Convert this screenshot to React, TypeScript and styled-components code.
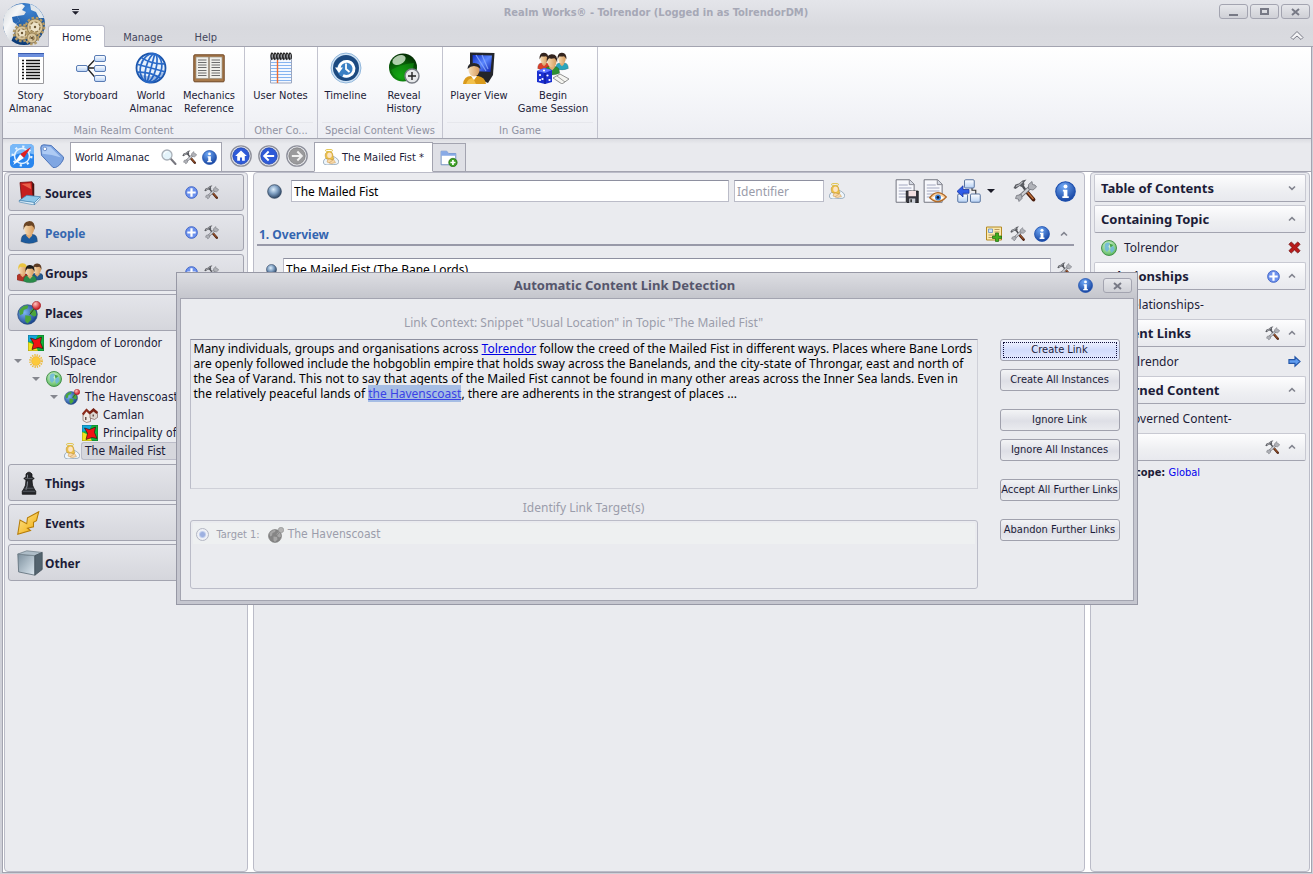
import React from "react";
import styled, { createGlobalStyle, css } from "styled-components";

const ink = "#1c1c38";
const line = "#a3a4b0";
const soft = "#bbbcc8";
const panel = "#eaebef";
const compact = `"DejaVu Sans Condensed", "DejaVu Sans", sans-serif`;

const GlobalStyle = createGlobalStyle`
  * { box-sizing: border-box; }
  body {
    margin: 0;
    font: 12px/15px "Noto Sans", sans-serif;
    color: ${ink};
    background: #d9dae0;
  }
  button, input { font: inherit; color: inherit; margin: 0; }
  ul { list-style: none; margin: 0; padding: 0; }
  h1, h2, h3, p { margin: 0; font-size: 12px; }
  svg { display: block; flex: none; }
`;

const smallText = css`
  font-family: ${compact};
  font-size: 11px;
`;

/* ---------- shared drawings ---------- */

const Hidden = styled.svg`
  width: 0;
  height: 0;
`;

const Paints = () => (
  <Hidden aria-hidden="true">
    <defs>
      <radialGradient id="blue" cx="40%" cy="25%" r="80%"><stop offset="0" stopColor="#6fa8f5" /><stop offset="1" stopColor="#123f9c" /></radialGradient>
      <radialGradient id="steel" cx="42%" cy="35%" r="65%"><stop offset="0" stopColor="#dceefc" /><stop offset=".5" stopColor="#7d9dc0" /><stop offset="1" stopColor="#2c4463" /></radialGradient>
      <radialGradient id="green" cx="40%" cy="80%" r="90%"><stop offset="0" stopColor="#12a012" /><stop offset=".6" stopColor="#075407" /><stop offset="1" stopColor="#021f02" /></radialGradient>
      <radialGradient id="earth" cx="35%" cy="40%" r="70%"><stop offset="0" stopColor="#7cb4f2" /><stop offset="1" stopColor="#123c86" /></radialGradient>
      <radialGradient id="aqua" cx="45%" cy="35%" r="65%"><stop offset="0" stopColor="#e4fbdf" /><stop offset="1" stopColor="#58b85c" /></radialGradient>
      <radialGradient id="red" cx="35%" cy="30%" r="70%"><stop offset="0" stopColor="#ffc4c0" /><stop offset="1" stopColor="#c8141c" /></radialGradient>
      <radialGradient id="logo" cx="60%" cy="15%" r="85%"><stop offset="0" stopColor="#3f86d6" /><stop offset="1" stopColor="#0c3b77" /></radialGradient>
      <linearGradient id="land" x1="0" y1="0" x2="1" y2="1"><stop offset="0" stopColor="#d3d8dc" /><stop offset=".4" stopColor="#f6f7f8" /><stop offset="1" stopColor="#b4bbc2" /></linearGradient>
      <linearGradient id="node" x1="0" y1="0" x2="0" y2="1"><stop offset="0" stopColor="#fff" /><stop offset="1" stopColor="#b5d0f4" /></linearGradient>
      <linearGradient id="skin" x1="0" y1="0" x2="1" y2="0"><stop offset="0" stopColor="#f6dcb4" /><stop offset="1" stopColor="#d79b5c" /></linearGradient>
      <linearGradient id="gold" x1="0" y1="0" x2="1" y2="1"><stop offset="0" stopColor="#ffe99a" /><stop offset="1" stopColor="#f0a800" /></linearGradient>
      <linearGradient id="screen" x1="0" y1="0" x2="1" y2="1"><stop offset="0" stopColor="#1030c8" /><stop offset=".5" stopColor="#5a86ff" /><stop offset="1" stopColor="#0a1ea8" /></linearGradient>
      <linearGradient id="cube" x1="0" y1="0" x2="1" y2="1"><stop offset="0" stopColor="#7d909e" /><stop offset="1" stopColor="#dfeaf2" /></linearGradient>
    </defs>
  </Hidden>
);

type IconProps = { size?: number };

const Svg = ({ size = 16, box = 32, children }: { size?: number; box?: number; children: React.ReactNode }) => (
  <svg width={size} height={size} viewBox={`0 0 ${box} ${box}`} aria-hidden="true">{children}</svg>
);

const Tools = ({ size }: IconProps) => (
  <Svg size={size} box={24}>
    <path d="M13.500 12.500 L20.500 20.500" stroke="#4a1e0e" strokeWidth="3.800" strokeLinecap="round" />
    <path d="M13.500 12 L20 19.500" stroke="#c0703a" strokeWidth="1.500" strokeLinecap="round" />
    <path d="M9 6 L13.500 12.500" stroke="#4d4f55" strokeWidth="2.200" />
    <path d="M0.500 9 L2.500 5.500 L6 4.500 L9.500 1.500 L13.500 .5 L11 3.500 L11.500 6 L9 8 L6.500 7 L2.500 10z" fill="#5c5e64" />
    <path d="M3 7.500 L6.500 5.800 L9.500 2.800" stroke="#b9bbc0" strokeWidth="1.200" fill="none" />
    <path d="M6 18.500 L18 7.500" stroke="#74767d" strokeWidth="3.800" />
    <path d="M6 18.500 L18 7.500" stroke="#cfd1d6" strokeWidth="2.200" />
    <path d="M15.500 10 L15.500 5.500 L19 2.500 L19.500 5.500 L22 6 L23.500 8 L20 11z" fill="#b0b2b8" stroke="#74767d" strokeWidth=".8" />
    <path d="M8.500 15.500 L9 19.500 L6 22.500 L5.300 20 L2.500 19.500 L3.500 16.500z" fill="#b0b2b8" stroke="#74767d" strokeWidth=".8" />
  </Svg>
);

const Info = ({ size }: IconProps) => (
  <Svg size={size} box={20}>
    <circle cx="10" cy="10" r="9.300" fill="url(#blue)" stroke="#1d4fae" strokeWidth="1" />
    <path d="M7.500 8.300h4.300v6.200h1.300v1.700H7v-1.700h1.300V10H7.500z" fill="#fff" />
    <circle cx="10" cy="5.200" r="1.900" fill="#fff" />
  </Svg>
);

const Plus = ({ size = 13 }: IconProps) => (
  <Svg size={size} box={14}>
    <circle cx="7" cy="7" r="6.300" fill="#6d92ee" stroke="#3f62c4" />
    <path d="M7 2.500v9M2.500 7h9" stroke="#fff" strokeWidth="2.400" />
  </Svg>
);

const Chevron = ({ down = false }: { down?: boolean }) => (
  <svg width="8" height="6" viewBox="0 0 8 6" aria-hidden="true">
    <path d={down ? "M1 1.500l3 2.800l3-2.800" : "M1 4.500l3-2.800l3 2.800"} fill="none" stroke="#82848f" strokeWidth="1.600" />
  </svg>
);

const Caret = ({ color = "#1c1c28" }: { color?: string }) => (
  <svg width="8" height="4" viewBox="0 0 8 4" aria-hidden="true"><path d="M0 0h8L4 4z" fill={color} /></svg>
);

const Ball = ({ size }: IconProps) => (
  <Svg size={size} box={16}><circle cx="8" cy="8" r="7.300" fill="url(#steel)" stroke="#32465f" strokeWidth=".8" /></Svg>
);

const Logo = () => (
  <Svg size={44} box={44}>
    <circle cx="22" cy="22" r="21" fill="url(#logo)" />
    <path d="M5 9Q12 2 20 2L23 4L20 8L24 10L22 13L15 14L18 19L14 22L18 26L13 30L9 40Q2 33 1 23Q1 14 5 9z" fill="url(#land)" />
    <path d="M28 2Q38 5 42 16L37 16L34 10L29 8z" fill="#dfe6ec" />
    <path d="M10 15L15 14L18 19L14 22L11 20z" fill="#2a69b4" />
    {[[20, 31, 7], [33, 25, 8], [30, 36, 5]].map(([x, y, r]) => (
      <g key={x}>
        <circle cx={x} cy={y} r={r + 1} fill="none" stroke="#b59c68" strokeWidth="2.600" strokeDasharray="2.500 1.800" />
        <circle cx={x} cy={y} r={r} fill="#d8c59b" stroke="#8a7349" strokeWidth=".8" />
        <circle cx={x} cy={y} r={r - 3} fill="#ece2c8" stroke="#8a7349" strokeWidth="1.200" strokeDasharray="3 1.500" />
        <circle cx={x} cy={y} r="1.200" fill="#6a5634" />
      </g>
    ))}
  </Svg>
);

const ListDoc = () => (
  <Svg size={32}>
    <path d="M3.500 2.500h25v29h-25z" fill="#fff" stroke="#9a9a9e" />
    <path d="M3 1h26v4H3z" fill="#6d8fdc" /><path d="M3 1h26v1H3z" fill="#3a5cb0" />
    {[8, 11, 14, 17, 20, 23, 26].map((y) => <path key={y} d={`M7 ${y + 0.5}h2M11 ${y + 0.5}h14`} stroke="#111" strokeWidth="1.400" />)}
  </Svg>
);

const Board = () => (
  <Svg size={32}>
    <path d="M12 16h9M12 16L21 6.500M12 16l9 10.500" stroke="#222" strokeWidth="1.300" fill="none" />
    {[[1, 13], [19, 3], [19, 13], [19, 23]].map(([x, y]) => <rect key={`${x}-${y}`} x={x + 0.5} y={y + 0.5} width="11" height="6" rx="1.500" fill="url(#node)" stroke="#5a7cb4" />)}
  </Svg>
);

const WireGlobe = () => (
  <Svg size={32}>
    <circle cx="16" cy="16" r="14.500" fill="#e6f0fb" stroke="#1b55ac" strokeWidth="1.800" />
    <g fill="none" stroke="#2a6ac8" strokeWidth="1.700" transform="rotate(15 16 16)">
      <path d="M16 1v30M1.500 16h29M4 8.500q12 4 24 0M4 23.500q12-4 24 0" />
      <ellipse cx="16" cy="16" rx="5" ry="14.500" />
      <ellipse cx="16" cy="16" rx="10.500" ry="14.500" />
    </g>
    <path d="M2 20a14.500 14.500 0 0 0 28-1Q16 29 2 20z" fill="#1352b4" opacity=".35" />
  </Svg>
);

const Book = () => (
  <Svg size={32}>
    <rect x=".8" y="2.800" width="30.400" height="27" rx="1" fill="#a8794a" stroke="#6e4522" />
    <path d="M3 5h12.500v21.500H3zM16.500 5H29v21.500H16.500z" fill="#f0efea" stroke="#8f8a80" strokeWidth=".6" />
    {[8, 10.5, 13, 15.5, 18.5, 21, 23.5].map((y) => <path key={y} d={`M5 ${y}h8.500M18.500 ${y}h8.500`} stroke="#6d6d6d" strokeWidth="1" />)}
  </Svg>
);

const Notes = () => (
  <Svg size={32}>
    <path d="M5.500 4h21v27h-21z" fill="#f4f8ff" stroke="#9aa6c0" />
    {[10, 13, 16, 19, 22, 25, 28].map((y) => <path key={y} d={`M6 ${y + 0.5}h20`} stroke="#86b4f0" strokeWidth="1" />)}
    <path d="M12.500 8v23" stroke="#f0692c" strokeWidth="1.400" />
    <path d="M5.500 3.500h21V8h-21z" fill="#d8dce4" />
    {[7, 10, 13, 16, 19, 22, 25].map((x) => <path key={x} d={`M${x} 8q-2-5 0-7q2 1 1 6`} stroke="#222" strokeWidth="1.300" fill="none" />)}
  </Svg>
);

const Clock = () => (
  <Svg size={32}>
    <circle cx="16" cy="16" r="15" fill="#cfe2f4" stroke="#7ea9d4" strokeWidth=".8" />
    <circle cx="16" cy="16" r="13" fill="#1c4a80" /><circle cx="16" cy="17" r="9" fill="#3a80c4" />
    <path d="M9 17a7.500 7.500 0 1 1 4 6.500" stroke="#fff" strokeWidth="2.800" fill="none" />
    <path d="M5 15.500h8l-4 5.500z" fill="#fff" />
    <path d="M16 11.500v5.500l3.500 3" stroke="#fff" strokeWidth="1.800" fill="none" />
  </Svg>
);

const Sphere = () => (
  <Svg size={32}>
    <circle cx="15" cy="15.500" r="14" fill="url(#green)" />
    <ellipse cx="11" cy="8" rx="7" ry="4.500" fill="#e8f8e4" opacity=".75" transform="rotate(-25 11 8)" />
    <path d="M3 18Q13 12 26 11Q25 24 15 28Q6 26 3 18z" fill="#16b016" opacity=".45" />
    <circle cx="24" cy="24" r="7" fill="#e6e8ea" stroke="#777b84" strokeWidth="1.400" />
    <path d="M24 20v8M20 24h8" stroke="#222" strokeWidth="1.400" />
  </Svg>
);

const Player = () => (
  <Svg size={32}>
    <path d="M7 .5L31.500 1L30 23L25 31L16 27L7 20z" fill="#23252b" />
    <path d="M9.500 3L29 3.500L27.500 20L10 19z" fill="url(#screen)" />
    <path d="M13 3l10 16M19 3l6 14" stroke="#8fb0ff" strokeWidth="1.200" opacity=".8" />
    <path d="M0 32q1-8 8-8h7q7 1 8 8z" fill="#d99a1c" /><path d="M3 32q2-6 7-6l3 6z" fill="#f2c04a" />
    <path d="M8 24h6l-3 4z" fill="#fff" />
    <ellipse cx="11" cy="18" rx="5.500" ry="6.500" fill="url(#skin)" />
    <path d="M4.500 17q0-6 6.500-6t6.500 6q-3-3-6.500-3t-6.500 3z" fill="#26262a" />
  </Svg>
);

const Person = ({ x, y, s, shirt, hair = "#33241e" }: { x: number; y: number; s: number; shirt: string; hair?: string }) => (
  <g transform={`translate(${x} ${y}) scale(${s})`}>
    <path d="M-8.500 18q0-7.500 5.500-7.500h6q5.500 0 5.500 7.500q-8.500 4-17 0z" fill={shirt} stroke="#222" strokeOpacity=".4" strokeWidth=".6" />
    <path d="M-3 9.500h6v2.500l-3 3l-3-3z" fill="#e0ab74" />
    <ellipse cx="0" cy="5" rx="5" ry="6.500" fill="url(#skin)" />
    <path d="M-5.800 6q-1-8.500 5.200-9q7-.5 6.400 9q-1-3-3-4.500q-4 1-6 0q-2 1.500-2.600 4.500z" fill={hair} />
  </g>
);

const Party = () => (
  <Svg size={32}>
    <Person x={7} y={3} s={0.75} shirt="#d8402c" />
    <Person x={25} y={3} s={0.75} shirt="#2aa5bc" />
    <Person x={15} y={5} s={0.9} shirt="#2c8f34" />
    <path d="M0 19l7-3l8 2v12l-7 2l-8-2z" fill="#1a2fd0" /><path d="M0 19l7-3l8 2l-7 3z" fill="#5f76ff" />
    <path d="M8 21v11" stroke="#0c1788" />
    {[[3, 23], [5.5, 27], [3, 28], [10.5, 23.5], [12.5, 28], [7, 18.5]].map(([a, b]) => <circle key={`${a}${b}`} cx={a} cy={b} r="1.100" fill="#fff" />)}
    <path d="M16 26l7-4l9 5l-7 5z" fill="#f4f4f0" stroke="#777" strokeWidth=".8" /><path d="M20 24l8 6" stroke="#888" strokeWidth=".8" />
  </Svg>
);

const Compass = () => (
  <Svg size={24}>
    <rect width="32" height="32" rx="6" fill="#2a86ee" /><path d="M0 6q0-6 6-6h20q6 0 6 6v8q-16-6-32 4z" fill="#8cc4fa" opacity=".8" />
    <circle cx="16" cy="16" r="10" fill="none" stroke="#e4f2ff" strokeWidth="2" />
    <circle cx="16" cy="16" r="12.500" fill="none" stroke="#e4f2ff" strokeWidth="3" strokeDasharray="3 6.800" />
    <path d="M28 4L18.500 18.500L13.500 13.500z" fill="#e02020" /><path d="M4 28L13.500 13.500l5 5z" fill="#fff" />
  </Svg>
);

const Tag = () => (
  <Svg size={24}>
    <path d="M1 5q0-4 4-4l10 1L31 17Q33 20 26 28Q20 33 17 31L2 15z" fill="#7fa6e2" stroke="#4a72b8" strokeWidth="1.300" />
    <path d="M3 5q1-2 3-2l8 1l14 14Q16 14 3 13z" fill="#aecbf4" /><circle cx="6.500" cy="6.500" r="2.400" fill="#fff" stroke="#4a72b8" />
  </Svg>
);

const Magnifier = () => (
  <Svg size={16}>
    <path d="M19 19L29 30" stroke="#77777f" strokeWidth="4" strokeLinecap="round" />
    <circle cx="12" cy="12" r="10" fill="#e4f4fb" stroke="#a9b0b8" strokeWidth="2.600" /><path d="M6 11q1-6 7-6" stroke="#fff" strokeWidth="2" fill="none" />
  </Svg>
);

const Round = ({ kind }: { kind: "home" | "back" | "next" }) => (
  <Svg size={22}>
    <circle cx="16" cy="16" r="14.800" fill="#f2f3f6" stroke="#8d8f9a" strokeWidth="2" />
    <circle cx="16" cy="16" r="12" fill={kind === "next" ? "#9a9a9c" : "#2e5ad8"} stroke={kind === "next" ? "#77777a" : "#1c3c9c"} />
    {kind === "home" && <path d="M16 8L7.500 16H10.500v7h4v-5h3v5h4v-7h3z" fill="#fff" />}
    {kind === "back" && <path d="M23.500 16H10M15.500 9.500L9 16l6.500 6.500" stroke="#fff" strokeWidth="2.800" fill="none" />}
    {kind === "next" && <path d="M8.500 16H22M16.500 9.500L23 16l-6.500 6.500" stroke="#f0f0f0" strokeWidth="2.800" fill="none" />}
  </Svg>
);

const Angel = () => (
  <Svg size={16}>
    <path d="M1 28Q0 20 8 18Q20 13 25 17Q32 21 32 27Q29 32 21 31L8 32Q2 32 1 28z" fill="#eef5fb" stroke="#7c93a8" strokeWidth="1.400" />
    <path d="M8 26Q9 18 14 18q8 1 11 9q-9 5-17-1z" fill="#f8d8a8" stroke="#c89a58" />
    <path d="M5 17Q2 6 12 5Q20 5 20 13Q20 17 22 20Q18 23 14 20L7 20z" fill="#ecc04a" stroke="#b98c28" />
    <ellipse cx="13" cy="12.500" rx="4.500" ry="5.500" fill="#fce4c4" />
    <path d="M12 28l8-6" stroke="#c89a58" strokeWidth="1.200" />
    <ellipse cx="12" cy="3" rx="7.500" ry="2.200" fill="none" stroke="#e0c040" strokeWidth="1.800" />
  </Svg>
);

const NewTab = () => (
  <Svg size={18}>
    <path d="M2 4h10l3 4h13v20H2z" fill="#fff" stroke="#6787bc" strokeWidth="1.600" /><path d="M2 4h10l3 4h13v4H2z" fill="#88aae6" />
    <circle cx="23" cy="24" r="7.500" fill="#3da024" stroke="#1f6c10" strokeWidth="1.200" /><path d="M23 19.500v9M18.500 24h9" stroke="#fff" strokeWidth="3" />
  </Svg>
);

const Earth = ({ size = 16, grey = false }: IconProps & { grey?: boolean }) => (
  <Svg size={size}>
    <circle cx="14" cy="18" r="13" fill={grey ? "#858585" : "url(#earth)"} stroke={grey ? "#666" : "#274a7c"} />
    <path d="M3 13Q8 5 15 6L14 10L9 12L8 17L4 19zM11 19l7 1l1 5l-5 5l-3-3zM22 9q4 5 4 10l-3 2l-5-3l-1-4z" fill={grey ? "#a6a6a6" : "#4ba63a"} />
    <path d="M17 18L24 9" stroke={grey ? "#777" : "#2d3a2c"} strokeWidth="1.300" />
    <circle cx="26" cy="6" r="5.500" fill={grey ? "#b4b4b4" : "url(#red)"} stroke={grey ? "#777" : "#a01018"} strokeWidth=".8" />
  </Svg>
);

const Planet = () => (
  <Svg size={16}>
    <circle cx="16" cy="16" r="15" fill="url(#aqua)" stroke="#3d8a44" strokeWidth="1.800" />
    <path d="M8 8Q14 3 18 7L15 13L17 18L12 24Q5 18 8 8zM20 12l6 1l1 7l-6 6l-3-6z" fill="#6fb8d8" opacity=".9" />
    <path d="M17 7l8 3l-6 5z" fill="#46a54a" />
  </Svg>
);

const MapTile = () => (
  <Svg size={16}>
    <path d="M0 0h32v32H0z" fill="#12b53c" /><path d="M0 0h20l-6 10L0 14z" fill="#12a8dc" /><path d="M0 14l14 6l6 12H0z" fill="#f4e41c" />
    <path d="M5 6l10 3l12-5l-2 11l5 12l-10-2l-12 4l3-12z" fill="#f01414" stroke="#111" strokeWidth="1.200" /><path d="M.5.500h31v31H.5z" fill="none" stroke="#111" strokeOpacity=".5" />
  </Svg>
);

const Sun = () => (
  <Svg size={16}>
    <circle cx="16" cy="16" r="12" fill="none" stroke="#eab93c" strokeWidth="3.600" strokeDasharray="2.600 2.100" />
    <circle cx="16" cy="16" r="9" fill="#fcc93a" stroke="#eaa61c" />
  </Svg>
);

const Town = () => (
  <Svg size={16}>
    <path d="M2 12L9 4l8 7v18l-8 2l-7-4z" fill="#eee9e4" stroke="#5a3026" /><path d="M0 13L9 3l9 9l-3 3l-6-6l-6 8z" fill="#8c2c1c" />
    <path d="M16 10l7-6l8 6v11l-6 4l-9-3z" fill="#ddd6d0" stroke="#5a3026" /><path d="M13 11l10-9l9 8l-3 4l-6-5l-6 5z" fill="#7a2416" /><path d="M6 20h3v6H6zM21 15h3v4h-3z" fill="#6a5048" />
  </Svg>
);

const Sources = () => (
  <Svg size={24}>
    <path d="M4 2L20 1L22 22L6 24z" fill="#c41e1e" stroke="#6e0c0c" /><path d="M6 4l12-1l1 8z" fill="#ea6048" /><path d="M20 1l3 3v18l-2 1z" fill="#4c1210" />
    <path d="M3 26l10-7l18 2l-8 8z" fill="#8fc8ea" stroke="#3c7cac" /><path d="M3 26v2l20 4v-3.500zM23 29v3l8-8v-3z" fill="#dff0fa" stroke="#3c7cac" strokeWidth=".8" />
  </Svg>
);

const People = () => <Svg size={26}><Person x={15} y={5} s={1.2} shirt="#1c5a9c" hair="#6a4424" /></Svg>;

const Groups = () => (
  <Svg size={26}>
    <Person x={7} y={7} s={0.95} shirt="#b03428" hair="#e8c440" />
    <Person x={25} y={7} s={0.9} shirt="#24588e" hair="#5e3c24" />
    <Person x={16} y={9} s={0.95} shirt="#2a8c4a" hair="#1c1c1c" />
  </Svg>
);

const Pawn = () => (
  <Svg size={24}>
    <path d="M12 4q4-5 8 0v4l3 2l-3 2q0 8 3 12l2 3v4H7v-4l2-3q3-4 3-12l-3-2l3-2z" fill="#26282c" stroke="#0c0c0e" />
    <path d="M14 5v4M14 14q0 6-2 11" stroke="#8a9098" strokeWidth="1.300" fill="none" /><path d="M8 27h16M11 10h10M10 23h12" stroke="#5c6168" strokeWidth="1.200" />
  </Svg>
);

const Bolt = () => (
  <Svg size={24}>
    <path d="M29 1L14 9L13 17L4 12L1 31L18 26L14 23L22 21L22 15L26 13z" fill="url(#gold)" stroke="#b57c08" strokeWidth="1.400" />
  </Svg>
);

const Cube = () => (
  <Svg size={26}>
    <path d="M1 5l21 2v24L2 27z" fill="url(#cube)" stroke="#5c6c78" /><path d="M1 5l11-4l19 2l-9 4z" fill="#aebdc8" stroke="#76858f" /><path d="M22 7l9-4v21l-9 7z" fill="#54646f" stroke="#46545e" />
  </Svg>
);

const Page = ({ children }: { children: React.ReactNode }) => (
  <Svg size={24}>
    <path d="M1.500 1h18l6 6v24h-24z" fill="#f7f8fc" stroke="#70727c" strokeWidth="1.300" /><path d="M19 1v6.500h6.500" fill="#d4d8e2" stroke="#70727c" />
    {[8, 12, 16, 20, 24].map((y) => <path key={y} d={`M5 ${y}h${y < 9 ? 12 : 17}`} stroke="#a4a8c0" strokeWidth="1.400" />)}
    {children}
  </Svg>
);

const SavePage = () => <Page><path d="M15 16h16v16H17l-2-2z" fill="#34343c" stroke="#111" /><path d="M18 16h10v7H18z" fill="#f2dfe0" /><path d="M19 26h8v6h-8z" fill="#c8ccd4" /><path d="M20.500 27h2v4h-2z" fill="#222" /></Page>;
const EyePage = () => <Page><path d="M9 25Q19 12 31 24Q20 36 9 25z" fill="#f8d0a0" stroke="#b06a28" strokeWidth="1.800" /><path d="M12 25q8-7 16 0q-8 6-16 0z" fill="#fff" /><circle cx="20" cy="24.500" r="4" fill="#3f84d8" /><circle cx="20" cy="24.500" r="1.800" fill="#112" /></Page>;

const Links = () => (
  <Svg size={24}>
    <path d="M20 11v4h5v5" stroke="#333" strokeWidth="1.500" fill="none" />
    <rect x="10" y="1" width="13" height="11" rx="1.500" fill="url(#node)" stroke="#54709c" strokeWidth="1.300" />
    <rect x="1" y="20" width="13" height="11" rx="1.500" fill="url(#node)" stroke="#54709c" strokeWidth="1.300" />
    <rect x="18" y="20" width="13" height="11" rx="1.500" fill="url(#node)" stroke="#54709c" strokeWidth="1.300" />
    <path d="M0 16.500L8 9v5h8v5H8v5z" fill="#2f5ce8" stroke="#1733a0" />
  </Svg>
);

const AddSnippet = () => (
  <Svg size={16}>
    <path d="M1 2h30v26H1z" fill="#fbe9ae" stroke="#b48a24" strokeWidth="2" /><path d="M5 6h8v7H5z" fill="#cfe4fa" stroke="#5d8ac4" strokeWidth="1.500" />
    <path d="M17 7h10M17 12h10M5 18h14M5 23h12" stroke="#b09258" strokeWidth="1.800" />
    <path d="M19 14h6v6h6v5h-6v6h-6v-6h-6v-5h6z" fill="#3fae1c" stroke="#1c6a0a" strokeWidth="1.400" />
  </Svg>
);

const Cross = () => (
  <Svg size={13} box={14}><path d="M3.500 1L7 4.300L10.500 1L13 3.500L9.700 7L13 10.500L10.500 13L7 9.700L3.500 13L1 10.500L4.300 7L1 3.500z" fill="#b81c1c" stroke="#6c1010" strokeWidth=".8" /></Svg>
);
const Arrow = () => (
  <Svg size={13} box={14}><path d="M1 5h6.500V2L13 7l-5.500 5V9H1z" fill="#5f9cf0" stroke="#2456a8" strokeWidth="1.200" /></Svg>
);

/* ---------- window ---------- */

const Window = styled.div`
  display: flex;
  flex-direction: column;
  min-height: 100vh;
  padding: 0 1px 1px 2px;
  background: #cfd0d8;
`;

const TitleBar = styled.header`
  display: grid;
  grid-template-columns: 1fr auto 1fr;
  height: 47px;
  margin: 0 -1px 0 -2px;
  padding: 0 3px 0 2px;
  background: linear-gradient(#e4e5ea, #d8d9de 60%, #dadbe0);
  border-bottom: 1px solid ${line};
`;

const TitleLeft = styled.div`
  display: flex;
`;

const AppButton = styled.button`
  border: 0;
  background: none;
  padding: 1px 0 0;
  height: 46px;
  cursor: pointer;
`;

const TabArea = styled.div`
  display: flex;
  flex-direction: column;
  justify-content: space-between;
  padding-left: 2px;
  flex: 1;
`;

const QuickMenu = styled.button`
  display: flex;
  flex-direction: column;
  gap: 1px;
  align-items: center;
  width: 16px;
  margin-left: 19px;
  padding: 9px 4px;
  border: 0;
  background: none;

  &::before { content: ""; width: 7px; height: 1px; background: #1c1c28; }
  svg { width: 7px; }
`;

const Tabs = styled.nav`
  display: flex;
  align-items: flex-end;
  margin-bottom: -1px;
`;

const RibbonTab = styled.button<{ $active?: boolean }>`
  height: 22px;
  padding: 2px 13px 0;
  margin-right: 4px;
  ${smallText}
  border: 1px solid transparent;
  border-bottom: 0;
  background: none;
  color: #44465c;
  ${(p) => p.$active && css`
    color: ${ink};
    background: #fff;
    border-color: ${soft};
    border-radius: 3px 3px 0 0;
  `}
`;

const AppTitle = styled.h1`
  padding-top: 5px;
  font-family: ${compact};
  font-size: 11px;
  color: #a6a8b6;
`;

const TitleRight = styled.div`
  display: flex;
  flex-direction: column;
  align-items: flex-end;
  gap: 11px;
  padding-top: 4px;
`;

const Row = styled.div<{ $gap?: number }>`
  display: flex;
  align-items: center;
  gap: ${(p) => p.$gap ?? 0}px;
`;

const FrameButton = styled.button`
  display: grid;
  place-items: center;
  width: 29px;
  height: 15px;
  padding: 0;
  border: 1px solid ${line};
  border-radius: 3px;
  background: linear-gradient(#e6e7eb, #cfd0d6);
`;

const FrameGlyph = ({ kind }: { kind: "min" | "max" | "close" }) => (
  <svg width="9" height="8" viewBox="0 0 9 8" fill="none" stroke="#777985" strokeWidth="2" aria-hidden="true">
    {kind === "min" && <path d="M0 7h9" />}
    {kind === "max" && <path d="M1 1h7v5H1z" />}
    {kind === "close" && <path d="M1 1l7 6M8 1L1 7" />}
  </svg>
);

const Bare = styled.button`
  display: grid;
  place-items: center;
  padding: 0;
  border: 0;
  background: none;
  cursor: pointer;
`;

/* ---------- ribbon ---------- */

const Ribbon = styled.section`
  display: flex;
  height: 92px;
  background: linear-gradient(#fff, #f6f7fa 50%, #edeef3);
  border: solid ${line};
  border-width: 0 1px 1px;
`;

const RibbonGroup = styled.div<{ $width: number }>`
  display: flex;
  flex-direction: column;
  justify-content: space-between;
  width: ${(p) => p.$width}px;
  border-right: 1px solid #c3c4cf;
`;

const Commands = styled.div`
  display: flex;
`;

const Command = styled.button<{ $width: number }>`
  display: flex;
  flex-direction: column;
  align-items: center;
  gap: 5px;
  width: ${(p) => p.$width}px;
  padding: 5px 0 0;
  border: 0;
  background: none;
  ${smallText}
  line-height: 13px;
  white-space: pre-line;
  cursor: pointer;
`;

const Caption = styled.div`
  margin: 0 4px;
  line-height: 15px;
  ${smallText}
  color: #9092a2;
  text-align: center;
  border-top: 1px solid #e6e7ec;
`;

const groups = [
  { name: "Main Realm Content", width: 242, items: [["Story\nAlmanac", 55, <ListDoc />], ["Storyboard", 65, <Board />], ["World\nAlmanac", 56, <WireGlobe />], ["Mechanics\nReference", 60, <Book />]] },
  { name: "Other Co...", width: 73, items: [["User Notes", 71, <Notes />]] },
  { name: "Special Content Views", width: 125, items: [["Timeline", 55, <Clock />], ["Reveal\nHistory", 62, <Sphere />]] },
  { name: "In Game", width: 155, items: [["Player View", 72, <Player />], ["Begin\nGame Session", 76, <Party />]] },
] as { name: string; width: number; items: [string, number, React.ReactNode][] }[];

/* ---------- document bar ---------- */

const DocBar = styled.div`
  display: flex;
  align-items: center;
  height: 33px;
  padding: 2px 0 0 7px;
  background: linear-gradient(#dcdde2, #e9eaee 5px);
  border: solid ${line};
  border-width: 0 1px 1px;
`;

const SearchBox = styled.div`
  display: flex;
  align-items: center;
  align-self: flex-end;
  gap: 5px;
  width: 152px;
  height: 29px;
  margin: 0 8px 0 6px;
  padding: 0 4px;
  background: #fff;
  border: 1px solid ${line};
  border-bottom: 0;
`;

const SearchInput = styled.input`
  flex: 1;
  min-width: 0;
  padding: 0;
  border: 0;
  outline: 0;
  ${smallText}
  background: none;
`;

const DocTab = styled.button<{ $active?: boolean }>`
  display: flex;
  align-items: center;
  align-self: flex-end;
  gap: 3px;
  ${smallText}
  border: 1px solid ${line};
  ${(p) => p.$active
    ? css`height: 30px; padding: 0 8px; margin: 0 0 -1px 6px; background: #fff; border-bottom-color: #fff;`
    : css`height: 28px; padding: 0 7px; border-left: 0; border-bottom: 0; background: #dfe0e6;`}
`;

/* ---------- workspace ---------- */

const Workspace = styled.main`
  display: grid;
  flex: 1;
  grid-template-columns: 244px minmax(0, 1fr) 220px;
  gap: 5px;
  padding: 0 1px;
  background: #fff;
  border: 1px solid ${line};
  border-top: 0;
`;

const Panel = styled.section`
  padding: 1px 3px;
  overflow: hidden;
  background: ${panel};
  border: 1px solid ${soft};
  border-radius: 4px;
`;

const Category = styled.div<{ $hot?: boolean }>`
  display: flex;
  align-items: center;
  height: 37px;
  margin-bottom: 3px;
  padding: 0 24px 0 8px;
  gap: 4px;
  color: ${(p) => (p.$hot ? "#3668b0" : ink)};
  background: linear-gradient(#e4e5ea, #d5d6dc);
  border: 1px solid ${line};
  border-radius: 3px;
`;

const IconSlot = styled.span<{ $width: number }>`
  display: grid;
  place-items: center;
  flex: none;
  width: ${(p) => p.$width}px;
`;

const CategoryName = styled.h2`
  flex: 1;
  padding-top: 2px;
`;

const Tree = styled.ul`
  margin-bottom: 4px;
  font-family: ${compact};
`;

const TreeRow = styled.li<{ $depth: number }>`
  display: flex;
  align-items: center;
  height: 18px;
  padding-left: ${(p) => 6 + p.$depth * 18}px;
`;

const TreeIcon = styled(IconSlot)`
  margin: 0 1px 0 6px;
`;

const TreeLabel = styled.button<{ $selected?: boolean }>`
  flex: 1;
  height: 18px;
  padding: 0 3px;
  text-align: left;
  white-space: nowrap;
  border: 1px solid transparent;
  border-right: 0;
  background: none;
  ${(p) => p.$selected && css`
    background: #d6d7dd;
    border-color: ${soft};
    border-radius: 3px 0 0 3px;
  `}
`;

const tree: { depth: number; label: string; icon: React.ReactNode; open?: boolean; selected?: boolean }[] = [
  { depth: 0, label: "Kingdom of Lorondor", icon: <MapTile /> },
  { depth: 0, label: "TolSpace", icon: <Sun />, open: true },
  { depth: 1, label: "Tolrendor", icon: <Planet />, open: true },
  { depth: 2, label: "The Havenscoast", icon: <Earth />, open: true },
  { depth: 3, label: "Camlan", icon: <Town /> },
  { depth: 3, label: "Principality of", icon: <MapTile /> },
  { depth: 2, label: "The Mailed Fist", icon: <Angel />, selected: true },
];

const CategoryBar = ({ name, icon, hot }: { name: string; icon: React.ReactNode; hot?: boolean }) => (
  <Category $hot={hot}>
    <IconSlot $width={24}>{icon}</IconSlot>
    <CategoryName>{name}</CategoryName>
    <Row $gap={6}>
      <Bare aria-label={`Add to ${name}`}><Plus /></Bare>
      <Bare aria-label={`${name} tools`}><Tools size={15} /></Bare>
    </Row>
  </Category>
);

const TopicBar = styled.div`
  display: flex;
  align-items: center;
  height: 34px;
  padding-right: 5px;
`;

const Field = styled.input`
  height: 22px;
  min-width: 0;
  padding: 0 2px;
  border: 1px solid ${soft};
  border-top-color: #8e90a0;
  background: #fff;
  color: #000;
  outline: 0;
  &::placeholder { color: #9a9caa; opacity: 1; }
`;

const NameField = styled(Field)`
  flex: 1;
`;

const IdField = styled(Field)`
  width: 90px;
  margin: 0 5px;
`;

const TopicTools = styled.div`
  display: flex;
  align-items: center;
  gap: 4px;
  margin-left: 50px;
`;

const SpacedButton = styled(Bare)<{ $before: number }>`
  margin-left: ${(p) => p.$before}px;
`;

const SectionHead = styled.div`
  display: flex;
  align-items: center;
  justify-content: space-between;
  height: 25px;
  margin: 13px 7px 0 0;
  padding: 3px 6px 0 2px;
  color: #3465b0;
  border-bottom: 2px solid #9899a8;
`;

const Snippet = styled.div`
  display: flex;
  align-items: center;
  margin: 12px 9px 0 0;
  padding-left: 9px;
  gap: 6px;
`;

const Fold = styled.div`
  display: flex;
  align-items: center;
  justify-content: space-between;
  height: 28px;
  margin-bottom: 3px;
  padding: 0 9px 0 6px;
  background: linear-gradient(#fdfdfe, #eeeff2 60%, #e8e9ee);
  border: 1px solid #c8c9d2;
  border-bottom-color: ${line};
  border-radius: 2px;
  h2 { font-size: 13px; }
`;

const FoldRow = styled.div<{ $height?: number }>`
  display: flex;
  align-items: center;
  height: ${(p) => p.$height ?? 26}px;
  padding: 0 5px 3px 7px;
  gap: 7px;
`;

const Grow = styled.span`
  flex: 1;
  white-space: nowrap;
`;

const GlobalLink = styled.a`
  color: #0000f0;
  text-decoration: none;
`;

const Small = styled.p`
  ${smallText}
`;

const FoldBar = ({ name, down, extra }: { name?: string; down?: boolean; extra?: React.ReactNode }) => (
  <Fold>
    {name ? <h2>{name}</h2> : <span />}
    <Row $gap={8}>{extra}<Bare aria-label={`Toggle ${name ?? "scope"}`}><Chevron down={down} /></Bare></Row>
  </Fold>
);

/* ---------- dialog ---------- */

const Overlay = styled.div`
  position: fixed;
  inset: 3px 0 0;
  display: grid;
  place-items: center;
`;

const Dialog = styled.section`
  width: min(962px, 96vw);
  padding: 0 3px 3px;
  background: #c5c6cf;
  border: 1px solid #9798a5;
`;

const DialogTitle = styled.header`
  display: flex;
  align-items: center;
  gap: 10px;
  height: 25px;
  margin: 0 -3px;
  padding: 0 5px;
  background: linear-gradient(#dcdde2, #c5c6cd);
`;

const DialogName = styled.h1`
  flex: 1;
  text-align: center;
  font-size: 13px;
  color: #55566c;
`;

const DialogBody = styled.div`
  display: grid;
  grid-template-columns: minmax(0, 1fr) 120px;
  gap: 22px;
  padding: 15px 13px 11px 9px;
  background: ${panel};
  border: 1px solid ${line};
`;

const Prompt = styled.p<{ $below: number }>`
  margin-bottom: ${(p) => p.$below}px;
  line-height: 18px;
  text-align: center;
  color: #9b9dab;
`;

const Excerpt = styled.div`
  height: 150px;
  margin-bottom: 10px;
  padding: 1px 3px;
  color: #000;
  white-space: nowrap;
  border: 1px solid #cfd0d8;
  border-top-color: #8e90a0;
  border-left-color: ${soft};
  overflow: hidden;
`;

const InlineLink = styled.a<{ $picked?: boolean }>`
  color: ${(p) => (p.$picked ? "#3a42e6" : "#0000e6")};
  background: ${(p) => (p.$picked ? "#a6bde4" : "none")};
`;

const Targets = styled.div`
  height: 69px;
  padding: 2px;
  border: 1px solid ${soft};
  border-radius: 3px;
`;

const Target = styled.label`
  display: flex;
  align-items: center;
  height: 21px;
  padding: 2px 3px 0;
  gap: 8px;
  color: #9b9dab;
  background: #eef0f1;
`;

const TargetName = styled.span`
  display: flex;
  align-items: center;
  gap: 4px;
  font-family: ${compact};
`;

const Radio = styled.input`
  appearance: none;
  width: 13px;
  height: 13px;
  border: 1px solid #b4b7c4;
  border-radius: 50%;
  background: radial-gradient(circle, #9db0e0 0 2px, #c0cdec 3px, #eef0f6 4px);
`;

const TargetKey = styled.span`
  ${smallText}
`;

const Actions = styled.div`
  display: flex;
  flex-direction: column;
  padding-top: 25px;
`;

const Action = styled.button<{ $focus?: boolean; $after: number }>`
  height: 22px;
  margin-bottom: ${(p) => p.$after}px;
  padding: 0;
  ${smallText}
  line-height: 16px;
  white-space: nowrap;
  border: 1px solid #a0a1ad;
  border-radius: 3px;
  background: ${(p) => (p.$focus ? "linear-gradient(#f4f6ff, #d2dcfc 50%, #e4eaff)" : "linear-gradient(#f3f4f6, #dedfe6 55%, #eaebef)")};
  ${(p) => p.$focus && css`outline: 1px dotted #10103c; outline-offset: -4px;`}
`;

export default function App() {
  return (
    <Window>
      <GlobalStyle />
      <Paints />
      <TitleBar>
        <TitleLeft>
          <AppButton aria-label="Application menu"><Logo /></AppButton>
          <TabArea>
            <QuickMenu aria-label="Customize toolbar"><Caret /></QuickMenu>
            <Tabs>
              <RibbonTab $active>Home</RibbonTab>
              <RibbonTab>Manage</RibbonTab>
              <RibbonTab>Help</RibbonTab>
            </Tabs>
          </TabArea>
        </TitleLeft>
        <AppTitle>Realm Works® - Tolrendor (Logged in as TolrendorDM)</AppTitle>
        <TitleRight>
          <Row $gap={2}>
            <FrameButton aria-label="Minimize"><FrameGlyph kind="min" /></FrameButton>
            <FrameButton aria-label="Maximize"><FrameGlyph kind="max" /></FrameButton>
            <FrameButton aria-label="Close"><FrameGlyph kind="close" /></FrameButton>
          </Row>
          <Bare aria-label="Collapse ribbon">
            <svg width="26" height="11" viewBox="0 0 26 11" aria-hidden="true"><path d="M7 7.500l6-6l6 6l-2 2l-4-3.500l-4 3.500z" fill="#f4f4f6" stroke="#777985" strokeLinejoin="round" /></svg>
          </Bare>
        </TitleRight>
      </TitleBar>

      <Ribbon>
        {groups.map((g) => (
          <RibbonGroup key={g.name} $width={g.width}>
            <Commands>
              {g.items.map(([label, width, icon]) => (
                <Command key={label} $width={width}>{icon}<span>{label}</span></Command>
              ))}
            </Commands>
            <Caption>{g.name}</Caption>
          </RibbonGroup>
        ))}
      </Ribbon>

      <DocBar>
        <Row $gap={6}>
          <Bare aria-label="Navigator"><Compass /></Bare>
          <Bare aria-label="Tags"><Tag /></Bare>
        </Row>
        <SearchBox>
          <SearchInput aria-label="Almanac" defaultValue="World Almanac" />
          <Bare aria-label="Search"><Magnifier /></Bare>
          <Bare aria-label="Almanac tools"><Tools size={15} /></Bare>
          <Bare aria-label="Almanac help"><Info size={15} /></Bare>
        </SearchBox>
        <Row $gap={6}>
          <Bare aria-label="Home"><Round kind="home" /></Bare>
          <Bare aria-label="Back"><Round kind="back" /></Bare>
          <Bare aria-label="Forward"><Round kind="next" /></Bare>
        </Row>
        <DocTab $active><Angel />The Mailed Fist *</DocTab>
        <DocTab aria-label="New tab"><NewTab /></DocTab>
      </DocBar>

      <Workspace>
        <Panel>
          <CategoryBar name="Sources" icon={<Sources />} />
          <CategoryBar name="People" icon={<People />} hot />
          <CategoryBar name="Groups" icon={<Groups />} />
          <CategoryBar name="Places" icon={<Earth size={24} />} />
          <Tree>
            {tree.map((t) => (
              <TreeRow key={t.label} $depth={t.depth}>
                <IconSlot $width={8}>{t.open && <Caret color="#85878f" />}</IconSlot>
                <TreeIcon $width={16}>{t.icon}</TreeIcon>
                <TreeLabel $selected={t.selected}>{t.label}</TreeLabel>
              </TreeRow>
            ))}
          </Tree>
          <CategoryBar name="Things" icon={<Pawn />} />
          <CategoryBar name="Events" icon={<Bolt />} />
          <CategoryBar name="Other" icon={<Cube />} />
        </Panel>

        <Panel>
          <TopicBar>
            <IconSlot $width={34}><Ball size={15} /></IconSlot>
            <NameField aria-label="Topic name" defaultValue="The Mailed Fist" />
            <IdField aria-label="Identifier" placeholder="Identifier" />
            <Angel />
            <TopicTools>
              <Bare aria-label="Save topic"><SavePage /></Bare>
              <Bare aria-label="Preview topic"><EyePage /></Bare>
              <SpacedButton $before={6} aria-label="Related topics"><Links /></SpacedButton>
              <SpacedButton $before={2} aria-label="More relations"><Caret /></SpacedButton>
              <SpacedButton $before={14} aria-label="Topic tools"><Tools size={24} /></SpacedButton>
              <SpacedButton $before={14} aria-label="Topic help"><Info size={21} /></SpacedButton>
            </TopicTools>
          </TopicBar>
          <SectionHead>
            <h2>1. Overview</h2>
            <Row $gap={8}>
              <Bare aria-label="Add snippet"><AddSnippet /></Bare>
              <Bare aria-label="Section tools"><Tools size={16} /></Bare>
              <Bare aria-label="Section help"><Info size={16} /></Bare>
              <SpacedButton $before={2} aria-label="Collapse section"><Chevron /></SpacedButton>
            </Row>
          </SectionHead>
          <Snippet>
            <Ball size={11} />
            <NameField aria-label="Overview name" defaultValue="The Mailed Fist (The Bane Lords)" />
            <Bare aria-label="Snippet tools"><Tools size={15} /></Bare>
          </Snippet>
        </Panel>

        <Panel>
          <FoldBar name="Table of Contents" down />
          <FoldBar name="Containing Topic" />
          <FoldRow><Planet /><Grow>Tolrendor</Grow><Bare aria-label="Remove"><Cross /></Bare></FoldRow>
          <FoldBar name="Relationships" extra={<Bare aria-label="Add relationship"><Plus /></Bare>} />
          <FoldRow><Grow>-No Relationships-</Grow></FoldRow>
          <FoldBar name="Content Links" extra={<Bare aria-label="Link tools"><Tools size={15} /></Bare>} />
          <FoldRow><Planet /><Grow>Tolrendor</Grow><Bare aria-label="Go to link"><Arrow /></Bare></FoldRow>
          <FoldBar name="Governed Content" />
          <FoldRow><Grow>-No Governed Content-</Grow></FoldRow>
          <FoldBar extra={<Bare aria-label="Scope tools"><Tools size={15} /></Bare>} />
          <FoldRow $height={20}><Small><b>Link Scope:</b> <GlobalLink href="#scope">Global</GlobalLink></Small></FoldRow>
        </Panel>
      </Workspace>

      <Overlay>
        <Dialog role="dialog" aria-labelledby="dialog-title">
          <DialogTitle>
            <DialogName id="dialog-title">Automatic Content Link Detection</DialogName>
            <Bare aria-label="Help"><Info size={15} /></Bare>
            <FrameButton aria-label="Close dialog"><FrameGlyph kind="close" /></FrameButton>
          </DialogTitle>
          <DialogBody>
            <div>
              <Prompt $below={7}>Link Context: Snippet "Usual Location" in Topic "The Mailed Fist"</Prompt>
              <Excerpt>
                Many individuals, groups and organisations across <InlineLink href="#tolrendor">Tolrendor</InlineLink> follow the creed of the Mailed Fist in different ways. Places where Bane Lords<br />
                are openly followed include the hobgoblin empire that holds sway across the Banelands, and the city-state of Throngar, east and north of<br />
                the Sea of Varand. This not to say that agents of the Mailed Fist cannot be found in many other areas across the Inner Sea lands. Even in<br />
                the relatively peaceful lands of <InlineLink href="#havenscoast" $picked>the Havenscoast</InlineLink>, there are adherents in the strangest of places ...
              </Excerpt>
              <Prompt $below={3}>Identify Link Target(s)</Prompt>
              <Targets>
                <Target>
                  <Radio type="radio" name="target" defaultChecked />
                  <TargetKey>Target 1:</TargetKey>
                  <TargetName><Earth grey />The Havenscoast</TargetName>
                </Target>
              </Targets>
            </div>
            <Actions>
              <Action $focus $after={8}>Create Link</Action>
              <Action $after={18}>Create All Instances</Action>
              <Action $after={8}>Ignore Link</Action>
              <Action $after={18}>Ignore All Instances</Action>
              <Action $after={18}>Accept All Further Links</Action>
              <Action $after={0}>Abandon Further Links</Action>
            </Actions>
          </DialogBody>
        </Dialog>
      </Overlay>
    </Window>
  );
}
